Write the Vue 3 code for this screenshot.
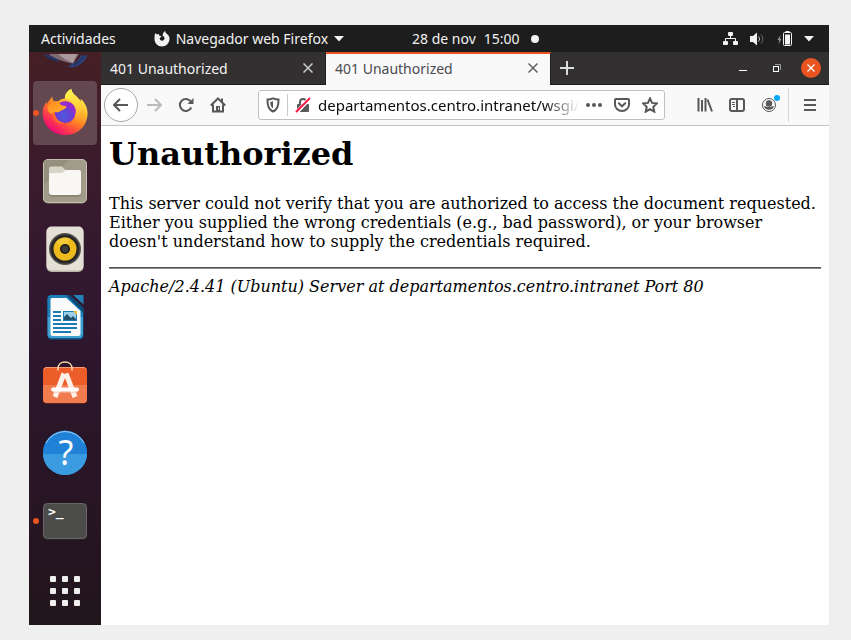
<script setup>
import { ref } from 'vue'

const activeTab = ref(1)
const tabs = ref([
  { id: 0, title: '401 Unauthorized' },
  { id: 1, title: '401 Unauthorized' },
])
const url = ref('departamentos.centro.intranet/wsgi/')
const cells = [0, 12, 24]
</script>

<template>
  <div class="screen">
    <div class="desktop">
      <header class="topbar">
        <button class="plain">Actividades</button>
        <button class="plain app-menu">
          <svg width="16" height="16" viewBox="0 0 16 16" aria-hidden="true">
            <path fill="#f2f2f2" d="M1.300 2.200C2 2.500 2.600 3 3 3.500C3.700 3 4.500 2.800 5.200 2.900C4.800 3.500 4.800 4 5.100 4.500L7.600 5.200L6.700 6.300C5.800 6.700 5.600 7.300 5.800 8C6.100 9.300 7.200 9.900 8.400 9.700C10 9.400 10.900 8 10.400 6.500C10.100 5.600 9.200 5 8.600 4.700C8.600 2.500 9.500 1 11.200 0C11.200 1.500 12 2.200 13 2.900C14.800 4.100 15.700 6 15.500 8.300C15.200 12.400 12 15.500 8 15.500C3.800 15.500.500 12.200.500 8C.500 5.800.500 4 1.300 2.200Z" />
          </svg>
          <span>Navegador web Firefox</span>
          <svg width="10" height="6" viewBox="0 0 10 6" aria-hidden="true"><path fill="#f2f2f2" d="M0 0h10L5 5.500z" /></svg>
        </button>
        <button class="plain clock">
          <span>28 de nov</span>
          <span>15:00</span>
          <i class="notice"></i>
        </button>
        <button class="plain status" aria-label="Sistema">
          <svg width="16" height="16" viewBox="0 0 16 16" aria-hidden="true">
            <g fill="#f2f2f2">
              <rect x="5" y="1" width="5" height="4" rx="1" /><rect x="0" y="10" width="5" height="4" rx="1" /><rect x="10" y="10" width="5" height="4" rx="1" />
            </g>
            <path fill="none" stroke="#f2f2f2" d="M7.500 5v3M2.500 10.500V7.500h10v3" />
          </svg>
          <svg width="16" height="16" viewBox="0 0 16 16" aria-hidden="true">
            <path fill="#f2f2f2" d="M0 5h3l4-3.500v13L3 11H0z" />
            <path fill="none" stroke="#bbb" d="M8.500 5.500a3.500 3.500 0 0 1 0 5" />
            <path fill="none" stroke="#666" d="M11 3.500a6.500 6.500 0 0 1 0 9" />
          </svg>
          <svg width="16" height="16" viewBox="0 0 16 16" aria-hidden="true">
            <path fill="#999" d="M3.500 4L.500 9h1.700l-.700 4L4.500 8H2.800z" />
            <rect x="6.500" y="1.500" width="8" height="13" rx="1" fill="none" stroke="#f2f2f2" />
            <path fill="#f2f2f2" d="M8.500 0h4v2h-4zM8 3.500h5v10H8z" />
          </svg>
          <svg width="10" height="6" viewBox="0 0 10 6" aria-hidden="true"><path fill="#f2f2f2" d="M0 0h10L5 5.500z" /></svg>
        </button>
      </header>

      <div class="workspace">
        <nav class="dock" aria-label="Aplicaciones">
          <button class="dock-item peek" aria-label="Thunderbird">
            <svg width="48" height="16" viewBox="0 0 48 16" aria-hidden="true">
              <path fill="#2b3560" d="M2 2.500L13 3L19 10C11 9 6 7 2 2.500Z" />
              <path fill="#7d6a73" d="M8 2h30l-6 9.500C24 10 14 7.500 8 2z" />
              <path fill="#ab9a9e" d="M17 2h19l-4 9C26 8.500 21 5.500 17 2z" />
              <path fill="#2d4079" d="M46.500 2.500C45 9 39 14.500 31 15.500L25 14.500L30 13.500L30 11L34 11C37 8 39 5 40 3L43 4Z" />
              <path stroke="#1e2650" fill="none" d="M33 13c4-2 7-5 10-9M4 3c3 3 7 5 11 6" />
            </svg>
          </button>
          <button class="dock-item focused running" aria-label="Firefox">
            <svg width="48" height="48" viewBox="0 0 48 48" aria-hidden="true">
              <defs>
                <linearGradient id="ffBody" x1=".85" y1=".1" x2=".25" y2=".95">
                  <stop offset="0" stop-color="#fff44f" /><stop offset=".3" stop-color="#ffbd2e" /><stop offset=".55" stop-color="#ff7a22" /><stop offset=".8" stop-color="#ff3750" /><stop offset="1" stop-color="#eb0878" />
                </linearGradient>
                <linearGradient id="ffFlame" x1=".5" y1="0" x2=".65" y2="1">
                  <stop offset="0" stop-color="#fff44f" /><stop offset=".5" stop-color="#ffcf3a" /><stop offset="1" stop-color="#ff9328" stop-opacity="0" />
                </linearGradient>
                <radialGradient id="ffGlobe" cx=".45" cy=".65" r=".7">
                  <stop offset="0" stop-color="#4a5be0" /><stop offset=".5" stop-color="#6a3fd4" /><stop offset="1" stop-color="#a922d2" />
                </radialGradient>
                <linearGradient id="ffFox" x1="0" y1="0" x2="1" y2="1">
                  <stop offset="0" stop-color="#ff8a22" /><stop offset="1" stop-color="#ffb42b" />
                </linearGradient>
              </defs>
              <path fill="url(#ffBody)" d="M11.300 7.500C11.300 9.500 12 11.500 13.200 12.600C14.500 12.200 16 12.200 17.200 12.500C20 9.500 24 9.600 24 9.600C23.500 6 26 2 30.300 0C30.500 3.500 34 6 36.500 8.500C37.800 10 38.800 11.500 39.200 13C39.800 12.300 40 11 39.800 9.800C44 14 46.800 19 46.600 25C46 37.500 36.500 46 24.500 46C12 46 2.500 37.500 1.700 25C1.400 20 3 15.500 6 12.500C5.800 13.500 5.800 14.500 6 15.300C7.500 12.300 9.500 9.500 11.300 7.500Z" />
              <path fill="url(#ffFlame)" d="M30.300 0C25.500 2.500 23.500 6 24 10C30 11 34.500 16 35 22C35.500 30 30 35 25 36C34 39 43 34 43.500 24C43.800 15 39 11 36.500 8.500C34 6 30.500 3.500 30.300 0Z" />
              <circle cx="24" cy="23.500" r="10.500" fill="url(#ffGlobe)" />
              <path fill="#922bd0" d="M18 14.500C23 10.500 31 12 34 18.500C35 21 35 23 34 25C32 20 29 18 24 18Z" />
              <path fill="url(#ffFox)" d="M6.500 17.500C8 14 12.500 12 17.200 12.500C18.500 14 19.500 15.700 21 16.500L25 17C26 18.500 24 20 21.500 21C19 21.700 18.500 24 15 23.200C12.500 22.500 15 26 11 25C8 24 6 21 6.500 17.500Z" />
              <path fill="#ff6a2a" d="M13.500 22.500C14 29 17.500 33.500 24 34C19 36.500 11 33 11.500 24Z" />
            </svg>
          </button>
          <button class="dock-item" aria-label="Archivos">
            <svg width="48" height="48" viewBox="0 0 48 48" aria-hidden="true">
              <rect x="2" y="2.500" width="44" height="44" rx="5" fill="#898471" />
              <rect x="2.500" y="2.500" width="43" height="43" rx="4.500" fill="#a19c89" stroke="#c6c2b3" />
              <path fill="#8e8976" d="M3 3h25L3 28z" opacity=".6" />
              <path fill="#d8d5c8" d="M10 9.500h11l4 4h13a2 2 0 0 1 2 2V20H8v-8.500a2 2 0 0 1 2-2z" />
              <path fill="#77725f" d="M8 36h32v1a3 3 0 0 1-3 3H11a3 3 0 0 1-3-3z" opacity=".5" />
              <path fill="#f8f7f4" d="M8 16h13l4-3h13a2 2 0 0 1 2 2v20a3 3 0 0 1-3 3H11a3 3 0 0 1-3-3z" />
            </svg>
          </button>
          <button class="dock-item" aria-label="Rhythmbox">
            <svg width="48" height="48" viewBox="0 0 48 48" aria-hidden="true">
              <rect x="5.500" y="2" width="37" height="45" rx="5" fill="#b9b5a6" />
              <rect x="5.500" y="1.500" width="37" height="44" rx="5" fill="#e4e0d5" />
              <circle cx="24" cy="24" r="16" fill="#55534f" /><circle cx="24" cy="24" r="14.500" fill="#292827" />
              <circle cx="24" cy="24" r="11.500" fill="#edbb1c" /><path fill="#f7d24b" d="M24 24L15 17a11.500 11.500 0 0 1 14-3.500z" opacity=".6" />
              <circle cx="24" cy="24" r="5" fill="#171717" /><circle cx="24" cy="24" r="3.500" fill="#3b3b3a" />
            </svg>
          </button>
          <button class="dock-item" aria-label="LibreOffice Writer">
            <svg width="48" height="48" viewBox="0 0 48 48" aria-hidden="true">
              <path fill="#115d8d" d="M10 2h17l15.500 14v26a4 4 0 0 1-4 4.500h-28a4 4 0 0 1-4-4V6A4 4 0 0 1 10 2z" />
              <path fill="#1a7fb8" d="M10 2h17l15 15v7H6.500V6A4 4 0 0 1 10 2z" />
              <path fill="#3ea0d0" d="M6.500 24H42v17a4 4 0 0 1-4 4H10.500a4 4 0 0 1-4-4z" />
              <path fill="#fcfcfc" d="M11 5h14.500L39.500 18v22.500a2.500 2.500 0 0 1-2.500 2.500H12a2.500 2.500 0 0 1-2.500-2.500V6.500A1.500 1.500 0 0 1 11 5z" />
              <path fill="#0d4b76" d="M25 2h4l13.500 12.500V20z" /><path fill="#2381b6" d="M32 2h10.500v9.500z" />
              <path stroke="#1b7bb5" stroke-width="2" d="M12 19h8M12 23h8M12 27h8M12 31h24M12 35h24M12 39h18" />
              <path fill="#1b7bb5" d="M22 18h14v10H22z" /><path fill="#9cd0ea" d="M23 19h12v8H23z" /><path fill="#264f69" d="M23 27v-3l3-3 4 4 2-2 3 3v1z" /><path fill="#f2b92c" d="M32 18h4v4z" />
            </svg>
          </button>
          <button class="dock-item" aria-label="Software de Ubuntu">
            <svg width="48" height="48" viewBox="0 0 48 48" aria-hidden="true">
              <rect x="2" y="6.500" width="44" height="36" rx="4" fill="#9c3513" />
              <rect x="2" y="6" width="44" height="36" rx="4" fill="#ec5d2a" />
              <path fill="#f17c50" d="M2 24h44v14a4 4 0 0 1-4 4H6a4 4 0 0 1-4-4z" />
              <path fill="none" stroke="#f69a76" d="M3 8.500C3.500 7 4.500 6.500 6 6.500h36c1.500 0 2.500.5 3 2" />
              <path fill="none" stroke="#f6dcae" stroke-width="1.500" stroke-linecap="round" d="M17 9V7.500C17 3.500 20 1 24 1s7 2.500 7 6.500V9" />
              <path fill="none" stroke="#fff1ea" stroke-width="5" d="M23 12.500L14 36M25 12.500L34 36" />
              <path stroke="#f0bfa9" stroke-width="1" d="M12 31h24" /><path stroke="#fff" stroke-width="4" stroke-linecap="round" d="M12 28.500h24" />
            </svg>
          </button>
          <button class="dock-item" aria-label="Ayuda">
            <svg width="48" height="48" viewBox="0 0 48 48" aria-hidden="true">
              <circle cx="24" cy="24" r="22" fill="#155e94" /><circle cx="24" cy="23.500" r="22" fill="#1f82d6" />
              <path fill="#3b9be0" d="M2 25h44a22 21 0 0 1-44 0z" />
              <path fill="none" stroke="#9fd0f3" d="M5 14a21.500 21.500 0 0 1 38 0" />
              <text class="help-mark" x="25" y="36" text-anchor="middle">?</text>
            </svg>
          </button>
          <button class="dock-item running" aria-label="Terminal">
            <svg width="48" height="48" viewBox="0 0 48 48" aria-hidden="true">
              <rect x="2" y="6" width="44" height="36.500" rx="4" fill="#303030" />
              <rect x="2.500" y="6.500" width="43" height="35" rx="4" fill="#4c4c4b" stroke="#686866" />
              <text class="prompt" x="7" y="19">&gt;_</text>
            </svg>
          </button>
          <button class="dock-item launcher" aria-label="Mostrar aplicaciones">
            <svg width="30" height="30" viewBox="0 0 30 30" fill="#eeeeec" aria-hidden="true">
              <template v-for="y in cells" :key="y">
                <rect v-for="x in cells" :key="x" :x="x" :y="y" width="6" height="6" rx="1" />
              </template>
            </svg>
          </button>
        </nav>

        <section class="browser">
          <div class="tabstrip">
            <div v-for="tab in tabs" :key="tab.id" class="tab" :class="{ active: tab.id === activeTab }">
              <button class="tab-title" @click="activeTab = tab.id">{{ tab.title }}</button>
              <button class="tab-close" aria-label="Cerrar pestaña">
                <svg width="10" height="10" viewBox="0 0 10 10" aria-hidden="true"><path stroke="currentColor" stroke-width="1.500" d="M.5.5l9 9M9.500.5l-9 9" /></svg>
              </button>
            </div>
            <button class="new-tab" aria-label="Nueva pestaña">
              <svg width="14" height="14" viewBox="0 0 14 14" aria-hidden="true"><path stroke="#ddd" stroke-width="2" d="M7 0v14M0 7h14" /></svg>
            </button>
            <div class="window-controls">
              <button aria-label="Minimizar"><svg width="10" height="10" viewBox="0 0 10 10" aria-hidden="true"><path stroke="#fff" d="M1 7.500h8" /></svg></button>
              <button aria-label="Restaurar">
                <svg width="10" height="10" viewBox="0 0 10 10" fill="none" aria-hidden="true"><path stroke="#999" d="M3 1.500h5.500V7" /><rect x="1.500" y="3.500" width="5" height="5" stroke="#fff" /></svg>
              </button>
              <button class="close" aria-label="Cerrar"><svg width="8" height="8" viewBox="0 0 8 8" aria-hidden="true"><path stroke="#fff" stroke-width="1.300" d="M.5.5l7 7M7.500.5l-7 7" /></svg></button>
            </div>
          </div>

          <div class="toolbar">
            <button class="tool back" aria-label="Atrás">
              <svg width="16" height="16" viewBox="0 0 16 16" aria-hidden="true"><path class="line" d="M15 8H1.500M7 2L1 8l6 6" /></svg>
            </button>
            <button class="tool" aria-label="Adelante" disabled>
              <svg width="16" height="16" viewBox="0 0 16 16" aria-hidden="true"><path class="line" d="M1 8h13.500M9 2l6 6-6 6" /></svg>
            </button>
            <button class="tool" aria-label="Recargar">
              <svg width="16" height="16" viewBox="0 0 16 16" aria-hidden="true"><path class="line" d="M13.300 10.500A6 6 0 1 1 12.800 4.500" /><path fill="currentColor" d="M15.500 1v6h-6z" /></svg>
            </button>
            <button class="tool" aria-label="Inicio">
              <svg width="16" height="16" viewBox="0 0 16 16" aria-hidden="true"><path class="line" d="M.8 8.500L8 1.500l7.200 7M3 7.500V14.500h10V7.500" /><path fill="currentColor" d="M6 9h4v5.500H6zM11 1.500h2v4l-2-2z" /><path stroke="#f9f9fa" d="M8.500 10.500v2" /></svg>
            </button>

            <div class="urlbar">
              <button class="shield" aria-label="Protección antirrastreo">
                <svg width="14" height="16" viewBox="0 0 14 16" aria-hidden="true"><path class="line" d="M7 1.300C5 2.200 3 2.500 1.500 2.500C1.300 8 2.200 12.500 7 14.500C11.800 12.500 12.700 8 12.500 2.500C11 2.500 9 2.200 7 1.300Z" /><path fill="currentColor" d="M7 4v7.500C5 10 4.300 8 4.200 5C5.300 4.900 6.200 4.600 7 4z" /></svg>
              </button>
              <button class="lock" aria-label="Conexión no segura">
                <svg width="16" height="16" viewBox="0 0 16 16" aria-hidden="true"><path class="line" d="M5 8V5a3 3 0 0 1 6 0v3" /><rect x="2" y="7" width="12" height="8" rx="1" fill="currentColor" /><path stroke="#fff" stroke-width="4" d="M2 15L15 1" /><path stroke="#ff1744" stroke-width="2" d="M1 15L15 1" /></svg>
              </button>
              <label class="address"><input v-model="url" type="text" aria-label="Dirección" spellcheck="false" /></label>
              <button aria-label="Acciones de página"><svg width="16" height="16" viewBox="0 0 16 16" fill="currentColor" aria-hidden="true"><circle cx="2" cy="8" r="2" /><circle cx="8" cy="8" r="2" /><circle cx="14" cy="8" r="2" /></svg></button>
              <button aria-label="Pocket">
                <svg width="16" height="16" viewBox="0 0 16 16" aria-hidden="true"><path class="line" d="M2 2h12a1 1 0 0 1 1 1v4.500a7 6.500 0 0 1-14 0V3a1 1 0 0 1 1-1z" /><path class="line" stroke-linecap="round" d="M4.800 6.300L8 9.300l3.200-3" /></svg>
              </button>
              <button aria-label="Marcador">
                <svg width="16" height="16" viewBox="0 0 16 16" aria-hidden="true"><path class="line" d="M8 1.300l2 4.600 5 .5-3.700 3.400 1 4.900L8 12.200l-4.300 2.500 1-4.900L1 6.400l5-.5z" /></svg>
              </button>
            </div>

            <button class="tool" aria-label="Biblioteca">
              <svg width="16" height="16" viewBox="0 0 16 16" aria-hidden="true"><path class="line" d="M1.500 1v13.500M5 3v11.500M8.500 1v13.500M10.500 2.500l4.500 12" /></svg>
            </button>
            <button class="tool" aria-label="Barra lateral">
              <svg width="16" height="16" viewBox="0 0 16 16" aria-hidden="true"><rect class="line" x="1" y="2" width="14" height="12" rx="2" /><path class="line" d="M8 2v12" /><path stroke="currentColor" d="M3 5.500h3M3 7.500h3M4 9.500h2" /></svg>
            </button>
            <button class="tool" aria-label="Cuenta">
              <svg width="22" height="20" viewBox="0 0 22 20" aria-hidden="true"><circle cx="11" cy="10" r="6.500" fill="none" stroke="currentColor" /><circle cx="11" cy="8.500" r="3.200" fill="currentColor" /><path fill="currentColor" d="M6 11.500c2-1 3 .5 5 .5s3-1.500 5-.5a5.500 5.500 0 0 1-10 0z" /><circle cx="19" cy="3" r="3" fill="#00a8f7" /></svg>
            </button>
            <button class="tool menu" aria-label="Menú">
              <svg width="16" height="16" viewBox="0 0 16 16" aria-hidden="true"><path class="line" d="M2 3h12M2 8h12M2 13h12" /></svg>
            </button>
          </div>

          <main class="page">
            <h1>Unauthorized</h1>
            <p>This server could not verify that you are authorized to access the document requested. Either you supplied the wrong credentials (e.g., bad password), or your browser doesn't understand how to supply the credentials required.</p>
            <hr />
            <address>Apache/2.4.41 (Ubuntu) Server at departamentos.centro.intranet Port 80</address>
          </main>
        </section>
      </div>
    </div>
  </div>
</template>

<style>
body {
  margin: 0;
  background: #efefef;
}
</style>

<style scoped>
* {
  box-sizing: border-box;
}
.screen {
  display: flex;
  min-height: 100vh;
  padding: 25px 22px 15px 29px;
  background: #efefef;
  font-family: "Noto Sans", sans-serif;
  font-size: 14px;
}
.desktop {
  display: flex;
  flex: 1;
  flex-direction: column;
  min-width: 0;
}
button {
  display: flex;
  align-items: center;
  justify-content: center;
  padding: 0;
  border: 0;
  background: none;
  color: inherit;
  font: inherit;
  white-space: nowrap;
}
svg {
  display: block;
  flex: none;
}
.topbar {
  display: flex;
  height: 27px;
  padding: 0 15px 0 12px;
  background: #1d1d1d;
  color: #f2f2f2;
}
.app-menu {
  gap: 6px;
  margin-left: 38px;
}
.clock {
  gap: 8px;
  margin-left: 68px;
}
.notice {
  width: 8px;
  height: 8px;
  margin-left: 3px;
  border-radius: 50%;
  background: #f2f2f2;
}
.status {
  gap: 11px;
  margin-left: auto;
}
.workspace {
  display: flex;
  flex: 1;
}
.dock {
  display: flex;
  flex: 0 0 72px;
  flex-direction: column;
  align-items: center;
  gap: 4px;
  padding-bottom: 2px;
  background: linear-gradient(#461f25, #3c1c2b 18%, #321830 38%, #2a1529 65%, #22151c);
}
.dock-item {
  position: relative;
  width: 64px;
  height: 64px;
  border-radius: 4px;
}
.peek {
  align-items: flex-start;
  height: 25px;
}
.focused {
  background: #634751;
}
.running::before {
  position: absolute;
  left: 0;
  width: 6px;
  height: 6px;
  border-radius: 50%;
  background: #e95420;
  content: "";
}
.launcher {
  margin-top: auto;
}
.help-mark {
  fill: #fff;
  font: 34px "Noto Sans", sans-serif;
}
.prompt {
  fill: #fff;
  font: bold 13px "DejaVu Sans Mono", monospace;
}
.browser {
  display: flex;
  flex: 1;
  flex-direction: column;
  min-width: 0;
  background: #fff;
}
.tabstrip {
  display: flex;
  height: 33px;
  border-bottom: 1px solid #1b1a1b;
  background: #323031;
  color: #f2f2f2;
}
.tab {
  display: flex;
  flex: 0 1 225px;
  padding: 0 7px 2px 9px;
  border-top: 2px solid transparent;
  border-right: 1px solid #1f1e1f;
}
.tab.active {
  height: 33px;
  padding-bottom: 3px;
  border-top-color: #e95420;
  background: #f9f9fa;
  color: #4a4a4f;
}
.tab-title {
  flex: 1;
  justify-content: flex-start;
}
.tab-close {
  width: 20px;
  color: #ccc;
}
.active .tab-close {
  color: #606063;
}
.new-tab {
  width: 32px;
}
.window-controls {
  display: flex;
  align-items: center;
  gap: 14px;
  margin-left: auto;
  padding-right: 8px;
}
.window-controls button {
  width: 20px;
  height: 20px;
}
.window-controls .close {
  border-radius: 50%;
  background: #e95420;
}
.toolbar {
  display: flex;
  align-items: center;
  height: 41px;
  padding: 0 3px;
  border-bottom: 1px solid #c4c4c4;
  background: #f9f9fa;
  color: #58585a;
}
.tool {
  width: 32px;
  height: 34px;
}
.tool:disabled {
  color: #bbb;
}
.back {
  width: 34px;
  border: 1px solid #a8a8a8;
  border-radius: 50%;
  background: #fff;
}
.line {
  fill: none;
  stroke: currentColor;
  stroke-width: 2px;
}
.urlbar {
  display: flex;
  flex: 1;
  align-items: center;
  gap: 12px;
  height: 30px;
  min-width: 0;
  margin: 0 24px;
  padding: 0 6px;
  border: 1px solid #c0c0c0;
  border-radius: 3px;
  background: #fff;
}
.shield {
  width: 23px;
  height: 22px;
  padding-right: 7px;
  border-right: 1px solid #c8c8c8;
}
.lock {
  margin: 0 -5px;
}
.address {
  display: flex;
  flex: 1;
  min-width: 0;
  margin-right: -6px;
  -webkit-mask-image: linear-gradient(to left, transparent, #000 36px);
  mask-image: linear-gradient(to left, transparent, #000 36px);
}
.address input {
  width: 100%;
  min-width: 0;
  height: 26px;
  padding: 0;
  border: 0;
  outline: 0;
  background: none;
  color: #0c0c0d;
  font: 15px "Noto Sans", sans-serif;
}
.menu {
  width: 38px;
  margin-left: 3px;
  padding-left: 5px;
  border-left: 1px solid #d7d7d8;
}
.page {
  padding: 10px 8px 8px;
  color: #000;
  font: 16px/19px "DejaVu Serif", serif;
}
h1 {
  margin: 0 0 21px;
  font-size: 32px;
  line-height: 37px;
}
p {
  margin: 0 0 16px;
}
hr {
  height: 2px;
  margin: 0 0 8px;
  border: 0;
  border-top: 1px solid #505050;
  border-bottom: 1px solid #8c8c8c;
}
address {
  font-style: italic;
}
</style>
